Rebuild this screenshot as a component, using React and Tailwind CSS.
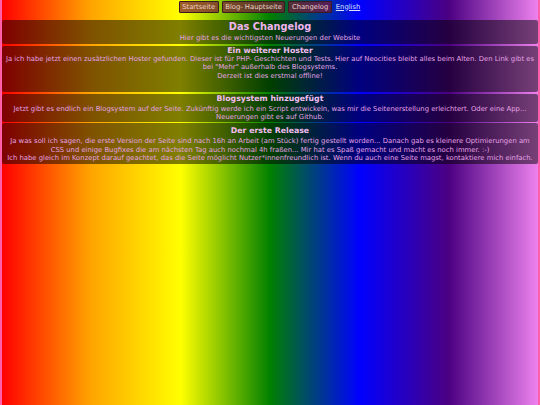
const entries = [
  {
    title: 'Ein weiterer Hoster',
    box: 'px-[3px] pt-[0px] pb-[12px]',
    head: 'mb-[0px]',
    lines: [
      'Ja ich habe jetzt einen zusätzlichen Hoster gefunden. Dieser ist für PHP- Geschichten und Tests. Hier auf Neocities bleibt alles beim Alten. Den Link gibt es bei "Mehr" außerhalb des Blogsystems.',
      'Derzeit ist dies erstmal offline!',
    ],
  },
  {
    title: 'Blogsystem hinzugefügt',
    box: 'px-[4.6px] pt-[0px] pb-[0px]',
    head: 'mb-[2px]',
    lines: [
      'Jetzt gibt es endlich ein Blogsystem auf der Seite. Zukünftig werde ich ein Script entwickeln, was mir die Seitenerstellung erleichtert. Oder eine App... Neuerungen gibt es auf Github.',
    ],
  },
  {
    title: 'Der erste Release',
    box: 'px-[4.6px] pt-[3px] pb-[1px]',
    head: 'mb-[2px]',
    lines: [
      'Ja was soll ich sagen, die erste Version der Seite sind nach 16h an Arbeit (am Stück) fertig gestellt worden... Danach gab es kleinere Optimierungen am CSS und einige Bugfixes die am nächsten Tag auch nochmal 4h fraßen... Mir hat es Spaß gemacht und macht es noch immer. :-)',
      'Ich habe gleich im Konzept darauf geachtet, das die Seite möglicht Nutzer*innenfreundlich ist. Wenn du auch eine Seite magst, kontaktiere mich einfach.',
    ],
  },
];

const navBtn =
  'px-[2.5px] h-[12px] flex items-center border border-[#3a1a20] bg-[rgba(120,25,55,0.7)] text-[#ecd0c8] rounded-[1px]';

const App = () => {
  return (
    <div
      className="min-h-screen border-x-2 border-[#ff5fa8] bg-[linear-gradient(to_right,red,orange,yellow,green,blue,indigo,violet)]"
      style={{ fontFamily: '"DejaVu Sans", Verdana, sans-serif' }}
    >
      <nav className="flex justify-center items-center gap-[3px] pt-[1px] text-[6.8px] leading-none">
        <span className={navBtn}>Startseite</span>
        <span className={navBtn}>Blog- Hauptseite</span>
        <span className={navBtn}>Changelog</span>
        <span className="text-[#dde0ff] underline px-[1px]">English</span>
      </nav>

      <div className="mt-[7px] flex flex-col gap-[1.5px]">
        <div className="bg-black/50 rounded-[2px] text-center pt-[1px] pb-[1px]">
          <h1 className="text-[9.8px] font-bold leading-[12px] text-[#efb4ef]">Das Changelog</h1>
          <p className="text-[6.83px] leading-[10px] text-[#e6a2e6]">
            Hier gibt es die wichtigsten Neuerungen der Website
          </p>
        </div>

        {entries.map((entry, index) => (
          <div key={index} className={`bg-black/50 rounded-[2px] text-center ${entry.box}`}>
            <h2 className={`text-[7.8px] font-bold leading-[9px] text-[#f2bef2] ${entry.head}`}>
              {entry.title}
            </h2>
            {entry.lines.map((line, i) => (
              <p key={i} className="text-[6.83px] leading-[8.5px] text-[#e6a2e6]">
                {line}
              </p>
            ))}
          </div>
        ))}
      </div>
    </div>
  );
};

export default App;
